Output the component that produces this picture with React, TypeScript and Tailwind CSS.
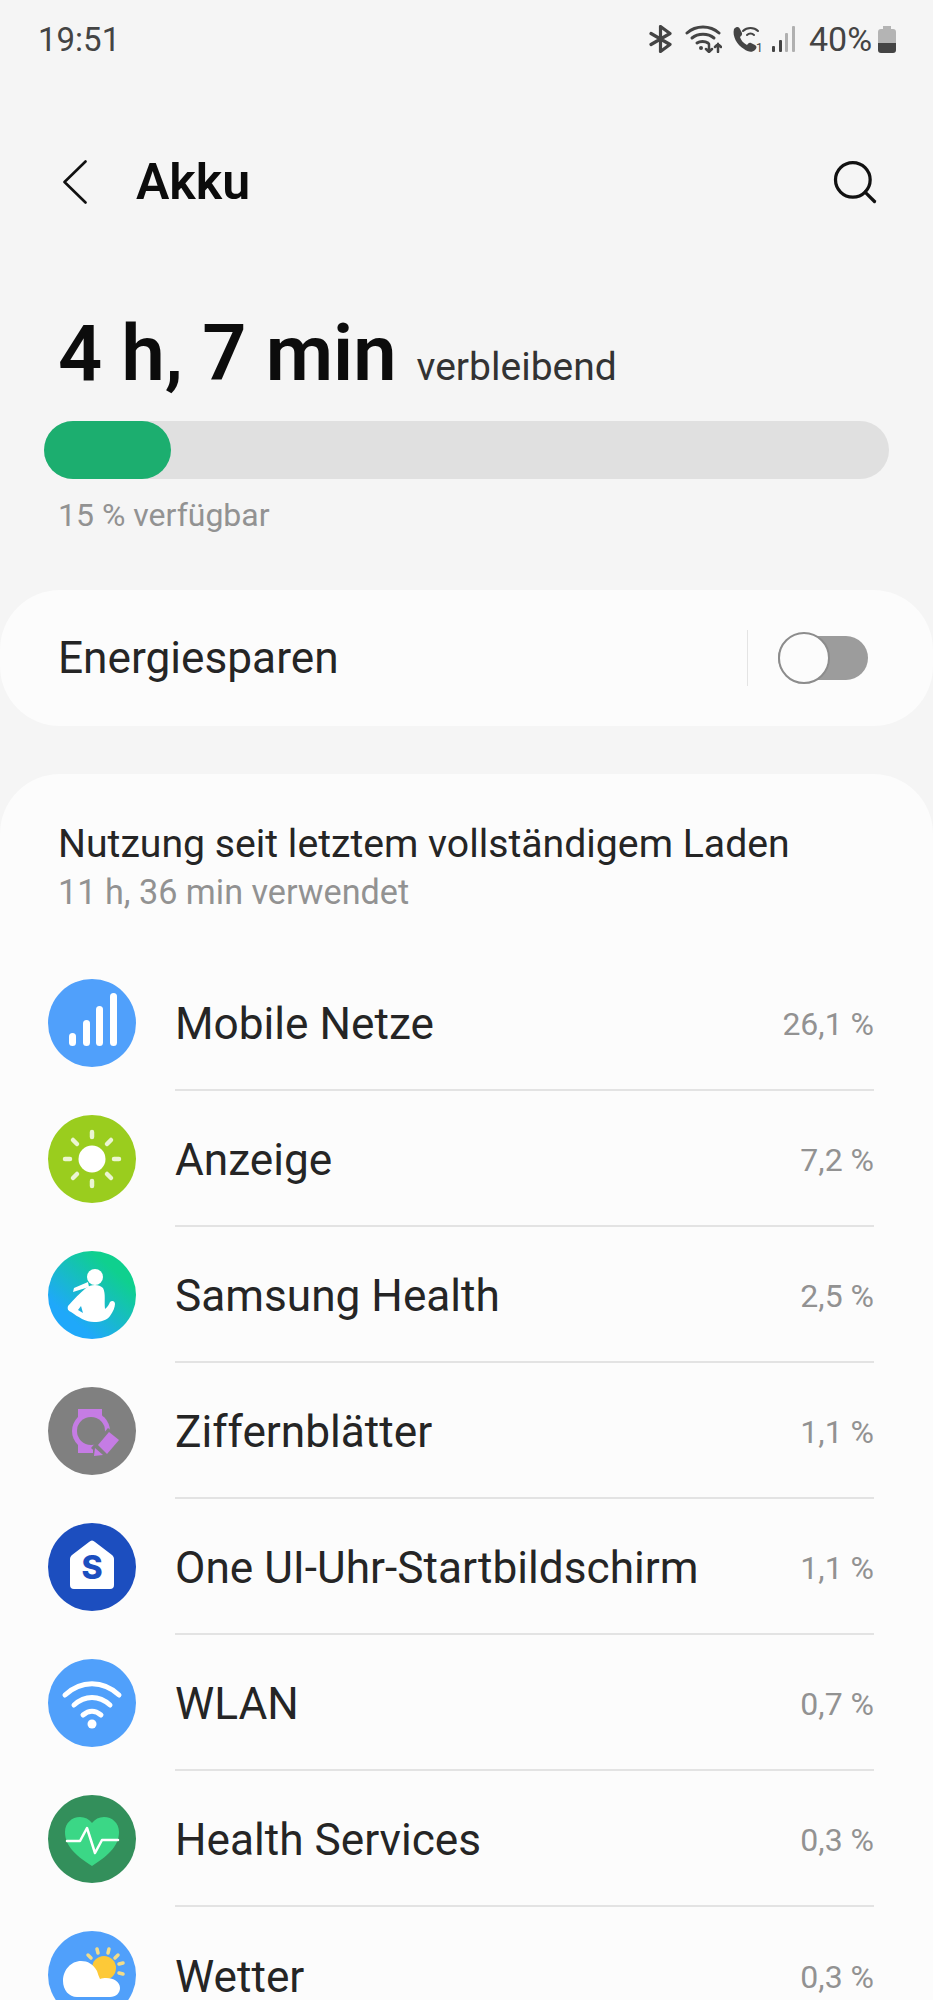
import React from 'react';
import { Search } from 'lucide-react';

const font = { fontFamily: '"Roboto", sans-serif' };

const MobileIcon = () => (
  <svg viewBox="0 0 88 88" className="w-[88px] h-[88px]">
    <circle cx="44" cy="44" r="44" fill="#50a0fb" />
    <rect x="21" y="54" width="7" height="13" rx="3.5" fill="#fff" />
    <rect x="35" y="41" width="7" height="26" rx="3.5" fill="#fff" />
    <rect x="48" y="27" width="7" height="40" rx="3.5" fill="#fff" />
    <rect x="62" y="14" width="7" height="53" rx="3.5" fill="#fff" />
  </svg>
);

const SunIcon = () => (
  <svg viewBox="0 0 88 88" className="w-[88px] h-[88px]">
    <circle cx="44" cy="44" r="44" fill="#9acd1e" />
    <circle cx="44" cy="44" r="13.5" fill="#fff" />
    <g stroke="#fff" strokeOpacity="0.8" strokeWidth="4.5" strokeLinecap="round">
      <path d="M44 17v5M44 66v5M17 44h5M66 44h5M25 25l4 4M59 59l4 4M25 63l4-4M59 29l4-4" />
    </g>
  </svg>
);

const HealthIcon = () => (
  <svg viewBox="0 0 88 88" className="w-[88px] h-[88px]">
    <defs>
      <linearGradient id="sh" x1="0.85" y1="0.1" x2="0.2" y2="0.85">
        <stop offset="0.15" stopColor="#0fd08e" />
        <stop offset="0.9" stopColor="#1fa8fa" />
      </linearGradient>
    </defs>
    <circle cx="44" cy="44" r="44" fill="url(#sh)" />
    <circle cx="47" cy="26" r="8" fill="#fff" />
    <path d="M40 31l-14 6-1 4 16-5z" fill="#fff" />
    <path d="M38 37C32 42 26 48 20 55c-1 3 0 5 3 6 7 5 15 10 23 10 7 0 13-2 16-6 3-4 5-9 5-12 0-3-3-4-5-2-1 2-2 5-5 7-1-8 1-15-2-21-4-4-12-4-17 0z" fill="#fff" />
    <path d="M33 55l-3 4 5 3z" fill="#1fb0e0" />
  </svg>
);

const WatchIcon = () => (
  <svg viewBox="0 0 88 88" className="w-[88px] h-[88px]">
    <circle cx="44" cy="44" r="44" fill="#808080" />
    <path d="M30 22h24v8H30zM30 58h15v8H30z" fill="#c57ce4" />
    <circle cx="43" cy="44" r="19" fill="#c57ce4" />
    <circle cx="43" cy="44" r="14" fill="#808080" />
    <path d="M60 41l14 11-18 21-13-12z" fill="#808080" />
    <path d="M61 45l10 8-12 14-9-9z" fill="#c57ce4" />
    <path d="M47 61l8 7-9 1z" fill="#c57ce4" />
  </svg>
);

const HomeIcon = () => (
  <svg viewBox="0 0 88 88" className="w-[88px] h-[88px]">
    <circle cx="44" cy="44" r="44" fill="#1c4ebf" />
    <path d="M41 19c2-2 4-2 6 0l17 13c1 1 2 2 2 4v26a4 4 0 0 1-4 4H26a4 4 0 0 1-4-4V36c0-2 1-3 2-4z" fill="#fff" />
    <text x="44" y="56" textAnchor="middle" fontSize="32" fontWeight="800" fill="#1c4ebf" fontFamily="Inter, sans-serif">S</text>
  </svg>
);

const WifiIcon = () => (
  <svg viewBox="0 0 88 88" className="w-[88px] h-[88px]">
    <circle cx="44" cy="44" r="44" fill="#50a0fb" />
    <g fill="none" stroke="#fff" strokeWidth="5" strokeLinecap="round">
      <path d="M17 36c16-15 38-15 54 0" />
      <path d="M26 46c11-10 25-10 36 0" />
      <path d="M35 56c6-5 12-5 18 0" />
    </g>
    <circle cx="44" cy="65" r="4.500" fill="#fff" />
  </svg>
);

const HeartIcon = () => (
  <svg viewBox="0 0 88 88" className="w-[88px] h-[88px]">
    <circle cx="44" cy="44" r="44" fill="#338f5b" />
    <path d="M44 71C30 62 17 52 17 37c0-9 7-15 15-15 5 0 9 2 12 6 3-4 7-6 12-6 8 0 15 6 15 15 0 15-13 25-27 34z" fill="#3bd786" />
    <path d="M19 46h13l7-13 8 25 7-13h16" fill="none" stroke="#fff" strokeWidth="2.500" strokeLinejoin="round" strokeLinecap="round" />
  </svg>
);

const WeatherIcon = () => (
  <svg viewBox="0 0 88 88" className="w-[88px] h-[88px]">
    <circle cx="44" cy="44" r="44" fill="#50a0fb" />
    <g stroke="#f2dc8a" strokeWidth="3.500" strokeLinecap="round">
      <path d="M43 27l-3-3M50 22l-1-4M60 22l1-4M67 27l3-3M71 33l4-1M71 42l4 1" />
    </g>
    <circle cx="56" cy="37" r="12" fill="#fdc938" />
    <path d="M29 66c-8 0-14-7-14-16 0-11 8-20 18-20 7 0 12 3 16 10 1 3 2 6 3 8 2-1 4-1 6-1 8 0 14 4 14 10 0 5-4 9-10 9z" fill="#fff" />
  </svg>
);

const rows = [
  { name: 'Mobile Netze', pct: '26,1 %', Icon: MobileIcon },
  { name: 'Anzeige', pct: '7,2 %', Icon: SunIcon },
  { name: 'Samsung Health', pct: '2,5 %', Icon: HealthIcon },
  { name: 'Ziffernblätter', pct: '1,1 %', Icon: WatchIcon },
  { name: 'One UI-Uhr-Startbildschirm', pct: '1,1 %', Icon: HomeIcon },
  { name: 'WLAN', pct: '0,7 %', Icon: WifiIcon },
  { name: 'Health Services', pct: '0,3 %', Icon: HeartIcon },
  { name: 'Wetter', pct: '0,3 %', Icon: WeatherIcon },
];

export default function App() {
  return (
    <div className="w-[933px] h-[2000px] overflow-hidden bg-[#f5f5f5]" style={font}>
      {/* status bar */}
      <div className="h-[78px] flex items-center justify-between pl-[38px] pr-[37px] text-[#444]">
        <span className="text-[33px] leading-none">19:51</span>
        <div className="flex items-center">
          <svg viewBox="0 0 23 28" className="w-[23px] h-[28px]">
            <path d="M2 8.500l19 11-9.500 7V1.500l9.500 7-19 11" fill="none" stroke="#444" strokeWidth="3.200" strokeLinejoin="round" strokeLinecap="round" />
          </svg>
          <svg viewBox="0 0 37 28" className="w-[37px] h-[28px] ml-[13px]">
            <g fill="none" stroke="#444" strokeWidth="3" strokeLinecap="round">
              <path d="M2 8c9-8 23-8 32 0" />
              <path d="M7 13c6-5 16-5 22 0" />
              <path d="M12 18c3-2 8-2 11 0" />
              <path d="M24 19v8M21 24l3 3 3-3M33 27v-8M30 22l3-3 3 3" strokeWidth="2.500" />
            </g>
            <circle cx="16" cy="23" r="2" fill="#444" />
          </svg>
          <svg viewBox="0 -2 32 32" className="w-[32px] h-[32px] ml-[10px]">
            <path d="M2 4c3-3 5-2 6 0l2 4c.5 2-1 3-2 4 1 3 3 6 7 8 1-1 2-3 4-2l4 2c2 1 2 3 0 5-3 3-7 2-11-1C5 20 0 11 2 4z" fill="#444" />
            <g fill="none" stroke="#444" strokeWidth="2" strokeLinecap="round">
              <path d="M11 6c4-4 11-4 15 0" />
              <path d="M15 10c2-2 5-2 7 0" />
            </g>
            <text x="24" y="27" fontSize="12" fill="#444" fontFamily="Roboto, sans-serif">1</text>
          </svg>
          <svg viewBox="0 0 23 28" className="w-[23px] h-[28px] ml-[8px]">
            <rect x="0" y="21" width="3" height="6" rx="1" fill="#444" />
            <rect x="7" y="15" width="3" height="12" rx="1" fill="#444" />
            <rect x="13" y="8" width="3" height="19" rx="1" fill="#b0b0b0" />
            <rect x="20" y="1" width="3" height="26" rx="1" fill="#b0b0b0" />
          </svg>
          <span className="text-[34px] leading-none ml-[14px] w-[62px]">40%</span>
          <svg viewBox="0 0 18 28" className="w-[18px] h-[28px] ml-[7px]">
            <path d="M5 1h8v3h2a3 3 0 0 1 3 3v11H0V7a3 3 0 0 1 3-3h2z" fill="#b4b4b4" />
            <path d="M0 18h18v7a3 3 0 0 1-3 3H3a3 3 0 0 1-3-3z" fill="#444" />
          </svg>
        </div>
      </div>

      {/* header */}
      <div className="h-[104px] mt-[52px] flex items-center pl-[63px] pr-[52px] justify-between">
        <div className="flex items-center">
          <svg viewBox="0 0 24 44" className="w-[24px] h-[44px]">
            <path d="M22.500 1.500L1.500 22l21 20.500" fill="none" stroke="#111" strokeWidth="2.600" strokeLinecap="round" strokeLinejoin="round" />
          </svg>
          <span className="ml-[49px] text-[50px] font-semibold text-[#0c0c0c] leading-none">Akku</span>
        </div>
        <Search className="w-[52px] h-[52px] text-[#111]" strokeWidth={1.5} />
      </div>

      {/* remaining */}
      <div className="mt-[75px] pl-[58px] flex items-baseline">
        <span className="text-[77.500px] font-semibold leading-[90px] text-[#0c0c0c]">4 h, 7 min</span>
        <span className="ml-[20px] text-[39px] text-[#333]">verbleibend</span>
      </div>
      <div className="mx-[44px] mt-[22px] h-[58px] rounded-full bg-[#e0e0e0]">
        <div className="w-[127px] h-full rounded-full bg-[#1cae6f]" />
      </div>
      <div className="mt-[16px] pl-[58px] text-[32px] leading-[40px] text-[#929292]">15 % verfügbar</div>

      {/* power saving */}
      <div className="mt-[55px] h-[136px] rounded-[60px] bg-[#fcfcfc] flex items-center pl-[58px] pr-[65px]">
        <span className="text-[44.200px] text-[#252525] flex-1">Energiesparen</span>
        <div className="w-px h-[56px] bg-[#e4e4e4] mr-[30px]" />
        <div className="relative w-[90px] h-[44px] rounded-full bg-[#9c9c9c]">
          <div className="absolute left-0 -top-[4px] w-[52px] h-[52px] rounded-full bg-[#fcfcfc] border-[2px] border-[#8c8c8c]" />
        </div>
      </div>

      {/* usage */}
      <div className="mt-[48px] rounded-t-[60px] bg-[#fcfcfc] pt-[46px] h-[1300px]">
        <div className="pl-[58px]">
          <div className="text-[39.200px] leading-[48px] text-[#252525]">Nutzung seit letztem vollständigem Laden</div>
          <div className="text-[34.200px] leading-[48px] text-[#929292]">11 h, 36 min verwendet</div>
        </div>
        <div className="mt-[39px]">
          {rows.map(({ name, pct, Icon }, i) => (
            <div key={name} className="flex h-[136px] pl-[48px] pr-[59px]">
              <div className="w-[88px] mt-[24px] shrink-0">
                <Icon />
              </div>
              <div className={`ml-[39px] pt-[5px] flex-1 flex items-center justify-between ${i < rows.length - 1 ? 'border-b-[2px] border-[#e3e3e3]' : ''}`}>
                <span className="text-[44.200px] leading-none text-[#252525]">{name}</span>
                <span className="text-[32px] leading-none mb-[2px] text-[#929292]">{pct}</span>
              </div>
            </div>
          ))}
        </div>
      </div>
    </div>
  );
}
